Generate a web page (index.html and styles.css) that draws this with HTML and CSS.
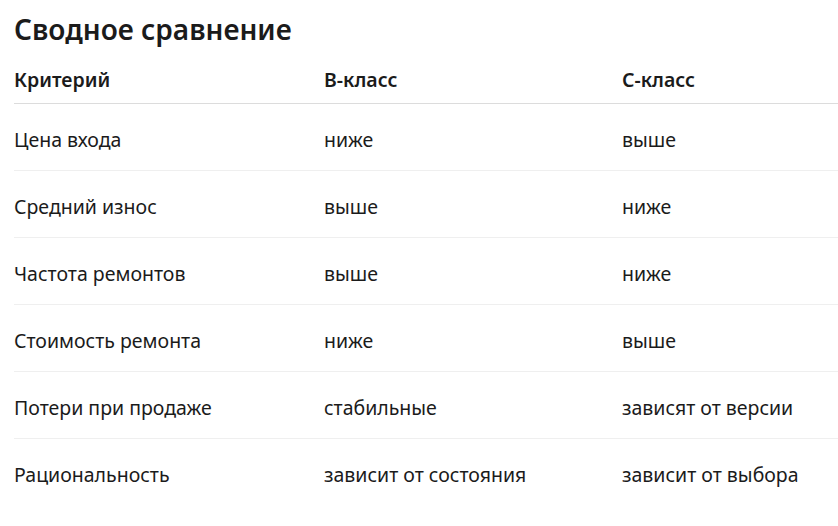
FILE: index.html
```html
<!DOCTYPE html>
<html lang="ru">
<head>
<meta charset="utf-8">
<link rel="stylesheet" href="styles.css">
</head>
<body>
<main class="page">
  <h2 class="title">Сводное сравнение</h2>
  <table class="cmp">
    <thead>
      <tr><th class="c1">Критерий</th><th class="c2">B-класс</th><th class="c3">C-класс</th></tr>
    </thead>
    <tbody>
      <tr><td>Цена входа</td><td>ниже</td><td>выше</td></tr>
      <tr><td>Средний износ</td><td>выше</td><td>ниже</td></tr>
      <tr><td>Частота ремонтов</td><td>выше</td><td>ниже</td></tr>
      <tr><td>Стоимость ремонта</td><td>ниже</td><td>выше</td></tr>
      <tr><td>Потери при продаже</td><td>стабильные</td><td>зависят от версии</td></tr>
      <tr><td>Рациональность</td><td>зависит от состояния</td><td>зависит от выбора</td></tr>
    </tbody>
  </table>
</main>
</body>
</html>
```
FILE: styles.css
```css
html, body { margin: 0; padding: 0; background: #fff; }
body {
  font-family: "Noto Sans", "Open Sans", sans-serif;
  color: #1b1b1b;
}
.page { padding: 0 0 0 14px; }
.title {
  margin: 0;
  padding-top: 11px;
  font-size: 28px;
  line-height: 37px;
  font-weight: 600;
}
.cmp {
  width: 100%;
  border-collapse: collapse;
  margin-top: 18px;
  font-size: 19.5px;
}
.cmp th {
  text-align: left;
  font-weight: 600;
  padding: 0 0 10px 0;
  line-height: 27px;
  border-bottom: 1px solid #dcdcdc;
}
.cmp .c1 { width: 310px; }
.cmp .c2 { width: 298px; }
.cmp td {
  padding: 4px 0 0 0;
  height: 62px;
  line-height: 27px;
  vertical-align: middle;
  border-bottom: 1px solid #efefef;
}
.cmp tbody tr:last-child td { border-bottom: none; }
```
